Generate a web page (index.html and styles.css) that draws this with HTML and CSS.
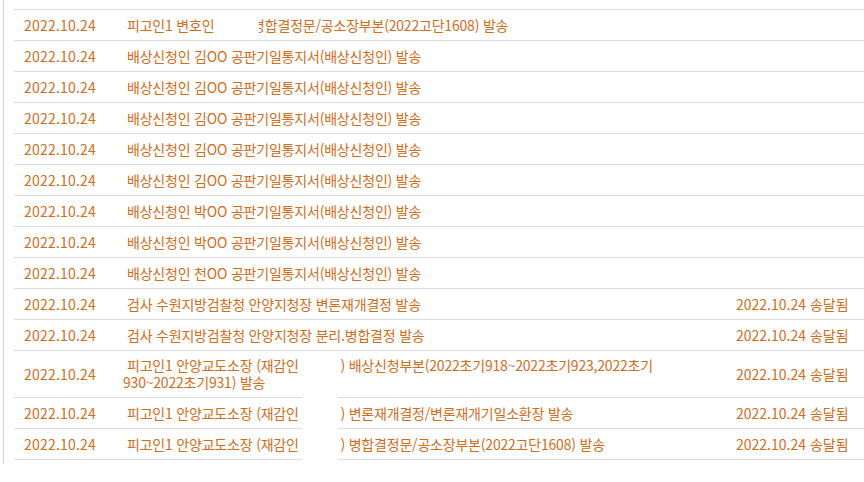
FILE: index.html
```html
<!DOCTYPE html>
<html lang="ko">
<head>
<meta charset="utf-8">
<title>송달내역</title>
<link rel="stylesheet" href="styles.css">
</head>
<body>
<div class="history">
  <div class="rows">
    <div class="row"><div class="date">2022.10.24</div><div class="content">피고인1 변호인 <span class="redacted redacted-top"></span>병합결정문/공소장부본(2022고단1608) 발송</div><div class="result"></div></div>
    <div class="row"><div class="date">2022.10.24</div><div class="content">배상신청인 김OO 공판기일통지서(배상신청인) 발송</div><div class="result"></div></div>
    <div class="row"><div class="date">2022.10.24</div><div class="content">배상신청인 김OO 공판기일통지서(배상신청인) 발송</div><div class="result"></div></div>
    <div class="row"><div class="date">2022.10.24</div><div class="content">배상신청인 김OO 공판기일통지서(배상신청인) 발송</div><div class="result"></div></div>
    <div class="row"><div class="date">2022.10.24</div><div class="content">배상신청인 김OO 공판기일통지서(배상신청인) 발송</div><div class="result"></div></div>
    <div class="row"><div class="date">2022.10.24</div><div class="content">배상신청인 김OO 공판기일통지서(배상신청인) 발송</div><div class="result"></div></div>
    <div class="row"><div class="date">2022.10.24</div><div class="content">배상신청인 박OO 공판기일통지서(배상신청인) 발송</div><div class="result"></div></div>
    <div class="row"><div class="date">2022.10.24</div><div class="content">배상신청인 박OO 공판기일통지서(배상신청인) 발송</div><div class="result"></div></div>
    <div class="row"><div class="date">2022.10.24</div><div class="content">배상신청인 천OO 공판기일통지서(배상신청인) 발송</div><div class="result"></div></div>
    <div class="row"><div class="date">2022.10.24</div><div class="content">검사 수원지방검찰청 안양지청장 변론재개결정 발송</div><div class="result">2022.10.24 송달됨</div></div>
    <div class="row"><div class="date">2022.10.24</div><div class="content">검사 수원지방검찰청 안양지청장 분리.병합결정 발송</div><div class="result">2022.10.24 송달됨</div></div>
    <div class="row"><div class="date">2022.10.24</div><div class="content">피고인1 안양교도소장 (재감인 <span class="redacted"></span>) 배상신청부본(2022초기918~2022초기923,2022초기930~2022초기931) 발송</div><div class="result">2022.10.24 송달됨</div></div>
    <div class="row"><div class="date">2022.10.24</div><div class="content">피고인1 안양교도소장 (재감인 <span class="redacted"></span>) 변론재개결정/변론재개기일소환장 발송</div><div class="result">2022.10.24 송달됨</div></div>
    <div class="row"><div class="date">2022.10.24</div><div class="content">피고인1 안양교도소장 (재감인 <span class="redacted"></span>) 병합결정문/공소장부본(2022고단1608) 발송</div><div class="result">2022.10.24 송달됨</div></div>
  </div>
  <div class="mask mask-top"></div>
  <div class="mask mask-bottom"></div>
</div>
</body>
</html>
```

FILE: styles.css
```css
html, body {
  margin: 0;
  padding: 0;
  background: #ffffff;
}

body {
  font-family: "Noto Sans CJK KR", "Noto Sans", sans-serif;
  font-size: 14px;
  color: #cf6d1c;
}

.history {
  position: relative;
  margin-left: 3px;
  border-left: 1px solid #cfcfcf;
  padding: 9px 0 4px 10px;
}

.rows {
  border-top: 1px solid #dcdcdc;
}

.row {
  display: grid;
  grid-template-columns: 109px 1fr 128px;
  align-items: center;
  min-height: 30px;
  border-bottom: 1px solid #dcdcdc;
  line-height: 17px;
}

.date {
  padding-left: 10px;
  letter-spacing: 0.2px;
}

.content {
  text-indent: 4px;
  letter-spacing: -0.2px;
  padding: 6px 40px 6px 0;
}

.redacted {
  display: inline-block;
  width: 38px;
  height: 1px;
  vertical-align: baseline;
}

.redacted-top {
  width: 34px;
}

.result {
  white-space: nowrap;
}

.mask {
  position: absolute;
  background: #ffffff;
}

.mask-top {
  left: 211px;
  top: 12px;
  width: 44px;
  height: 26px;
}

.mask-bottom {
  left: 298px;
  top: 352px;
  width: 36px;
  height: 110px;
}
```
